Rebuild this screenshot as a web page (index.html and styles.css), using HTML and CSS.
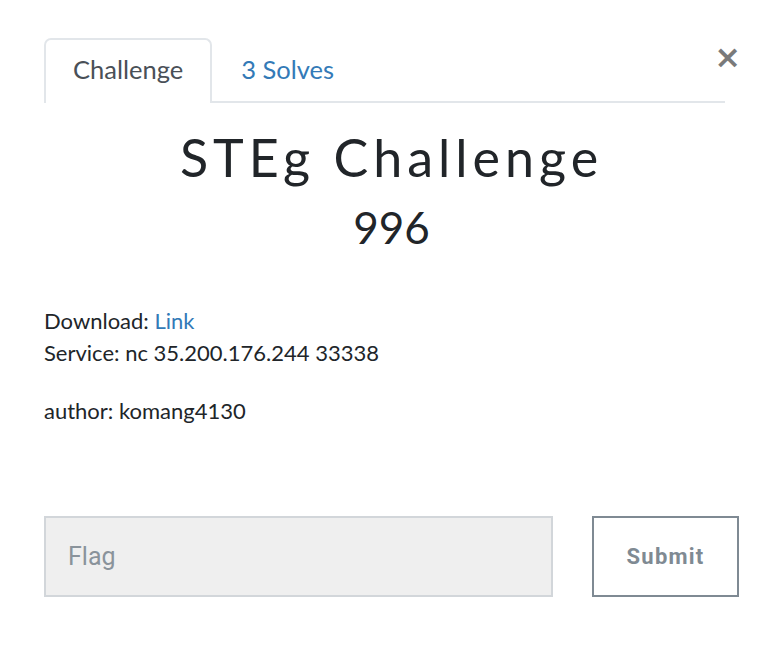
FILE: index.html
```html
<!DOCTYPE html>
<html>
<head>
<meta charset="utf-8">
<link rel="stylesheet" href="styles.css">
</head>
<body>
<div class="modal">
  <button class="close" aria-label="Close">&times;</button>
  <nav class="tabs">
    <a class="tab active">Challenge</a>
    <a class="tab">3 Solves</a>
  </nav>
  <h1 class="title">STEg Challenge</h1>
  <h2 class="value">996</h2>
  <div class="desc">
    <p>Download: <a class="link">Link</a><br>Service: nc 35.200.176.244 33338</p>
    <p>author: komang4130</p>
  </div>
  <form class="flag-form">
    <input class="flag-input" type="text" placeholder="Flag">
    <button class="submit" type="button">Submit</button>
  </form>
</div>
</body>
</html>
```
FILE: styles.css
```css
html, body {
  margin: 0;
  padding: 0;
  background: #fff;
}
body {
  font-family: Lato, "Open Sans", sans-serif;
  color: #212529;
}
.modal {
  position: relative;
  padding: 38px 41px 0 44px;
}
.close {
  position: absolute;
  top: 41px;
  right: 39px;
  border: 0;
  background: none;
  padding: 0;
  font-family: "DejaVu Sans", sans-serif;
  font-size: 32px;
  font-weight: bold;
  line-height: 1;
  color: #7a7a7a;
  cursor: pointer;
}
.tabs {
  display: flex;
  margin-right: 14px;
  border-bottom: 2px solid #e2e6ea;
}
.tab {
  font-size: 25.5px;
  line-height: 33px;
  padding: 13px 27px 15px;
  border: 2px solid transparent;
  border-bottom: 0;
  margin-bottom: -2px;
  color: #337ab7;
  text-decoration: none;
}
.tab.active {
  color: #495057;
  border-color: #e2e6ea;
  border-radius: 7px 7px 0 0;
  background: #fff;
  padding-bottom: 17px;
}
.title {
  margin: 24px 0 0;
  text-align: center;
  font-family: Lato, sans-serif;
  font-weight: 400;
  font-size: 52px;
  line-height: 60px;
  letter-spacing: 5px;
}
.value {
  margin: 16px 0 0;
  text-align: center;
  font-weight: 400;
  font-size: 44px;
  line-height: 48px;
}
.desc {
  margin-top: 54px;
  font-size: 22px;
  line-height: 32px;
}
.desc p {
  margin: 0 0 26px;
}
.desc p:last-child {
  margin-bottom: 0;
}
.link {
  color: #337ab7;
  text-decoration: none;
}
.flag-form {
  display: flex;
  gap: 39px;
  margin-top: 89px;
}
.flag-input {
  box-sizing: border-box;
  width: 509px;
  height: 81px;
  border: 2px solid #d2d6da;
  background: #efefef;
  padding: 0 22px;
  font-family: Roboto, sans-serif;
  font-size: 25px;
  color: #495057;
  outline: none;
}
.flag-input::placeholder {
  color: #8a939b;
}
.submit {
  box-sizing: border-box;
  width: 147px;
  height: 81px;
  border: 2px solid #7f8a93;
  background: #fff;
  font-family: Roboto, sans-serif;
  font-weight: bold;
  font-size: 22px;
  letter-spacing: 1.2px;
  color: #7f8a93;
  cursor: pointer;
}
```
